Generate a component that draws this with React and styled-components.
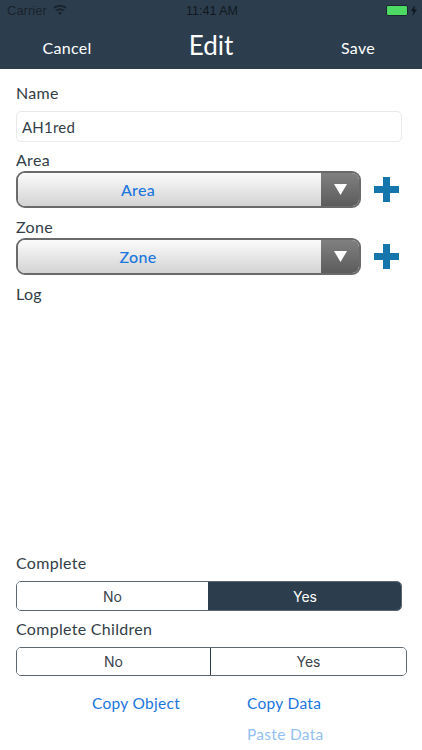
import React from 'react';
import styled, { createGlobalStyle } from 'styled-components';

const Global = createGlobalStyle`
  html, body { margin: 0; padding: 0; background: #fff; }
  body { font-family: "Lato", "Open Sans", sans-serif; }
`;

const Page = styled.div`
  width: 422px;
  height: 750px;
  overflow: hidden;
  display: flex;
  flex-direction: column;
  background: #fff;
`;

const Header = styled.header`
  height: 69px;
  background: #2c3e4e;
  flex: none;
`;

const StatusBar = styled.div`
  height: 21px;
  display: grid;
  grid-template-columns: 1fr auto 1fr;
  align-items: center;
  padding: 0 5px 0 7px;
  color: #11181f;
  font: 13px "Liberation Sans", sans-serif;
`;

const StatusLeft = styled.div`
  display: flex;
  align-items: center;
  gap: 6px;
  color: #1a232c;
`;

const StatusRight = styled.div`
  display: flex;
  align-items: center;
  justify-content: flex-end;
  gap: 3px;
`;

const Clock = styled.span`
  font-size: 12.5px;
  font-weight: 400;
`;

const Battery = styled.div`
  box-sizing: border-box;
  width: 22px;
  height: 11px;
  border-radius: 2px;
  background: #4cd964;
  border: 1px solid #1c2630;
`;

const NavBar = styled.div`
  height: 48px;
  display: grid;
  grid-template-columns: 134px 154px 134px;
  color: #fff;
`;

const NavButton = styled.span`
  align-self: end;
  padding-bottom: 12px;
  padding-left: ${p => p.$shift || 0}px;
  text-align: center;
  font-size: 16px;
  letter-spacing: 0.3px;
`;

const Title = styled.h1`
  margin: 0;
  padding-top: 6px;
  text-align: center;
  font-size: 26px;
  font-weight: 400;
  line-height: 36px;
`;

const Form = styled.main`
  flex: 1;
  display: flex;
  flex-direction: column;
  padding: 14px 16px 0;
`;

const Label = styled.label`
  display: block;
  height: 20px;
  line-height: 20px;
  font-size: 16px;
  letter-spacing: 0.3px;
  color: #333e48;
`;

const NameInput = styled.div`
  box-sizing: border-box;
  width: 386px;
  height: 31px;
  margin: 8px 0 8px;
  padding: 0 5px;
  display: flex;
  align-items: center;
  border: 1px solid #e9e9e9;
  border-radius: 5px;
  font-size: 15px;
  letter-spacing: 0.2px;
  color: #333e48;
`;

const PickerRow = styled.div`
  display: flex;
  align-items: center;
  gap: 12px;
  margin: 1px 0 9px;
`;

const Picker = styled.div`
  box-sizing: border-box;
  width: 345px;
  height: 37px;
  display: flex;
  border: 2px solid #6a6a6a;
  border-radius: 9px;
  overflow: hidden;
`;

const PickerValue = styled.div`
  flex: 1;
  display: flex;
  align-items: center;
  justify-content: center;
  padding-right: 63px;
  background: linear-gradient(#fbfbfb, #d3d3d3);
  color: #1b76dc;
  font-size: 16px;
  font-weight: 500;
  letter-spacing: 0.3px;
`;

const PickerArrow = styled.div`
  width: 38px;
  display: flex;
  align-items: center;
  justify-content: center;
  background: linear-gradient(#808080, #5c5c5c);
`;

const LogArea = styled.div`
  flex: 1;
`;

const Segments = styled.div`
  box-sizing: border-box;
  width: ${p => p.$width}px;
  height: ${p => p.$height}px;
  margin: 8px 0 8px;
  display: grid;
  grid-template-columns: ${p => p.$columns};
  border: 1px solid #5c6770;
  border-radius: 5px;
  overflow: hidden;
`;

const Segment = styled.div`
  display: flex;
  align-items: center;
  justify-content: center;
  font: 14px "Inter", sans-serif;
  background: ${p => (p.$on ? '#2c3e4e' : '#fff')};
  color: ${p => (p.$on ? '#fff' : '#3c444c')};
  & + & {
    border-left: 1px solid #2c3e4e;
  }
`;

const Actions = styled.div`
  display: grid;
  grid-template-columns: 155px auto;
  grid-auto-rows: 31px;
  padding: 3px 0 0 76px;
  height: 63px;
`;

const Action = styled.span`
  display: flex;
  align-items: center;
  font-size: 15.5px;
  letter-spacing: 0.3px;
  color: ${p => (p.$muted ? '#93c1f1' : '#1b76dc')};
  grid-column: ${p => p.$column};
`;

const Wifi = () => (
  <svg width="14" height="11" viewBox="0 0 16 12" fill="#1a232c">
    <path d="M8 11.5 5.600 8.600a3.800 3.800 0 0 1 4.800 0zM4.400 7.200 3 5.500a7.800 7.800 0 0 1 10 0l-1.400 1.700a5.600 5.600 0 0 0-7.200 0zM1.800 4.100.4 2.400a11.800 11.800 0 0 1 15.200 0l-1.400 1.700a9.600 9.600 0 0 0-12.400 0z" />
  </svg>
);

const Bolt = () => (
  <svg width="6" height="11" viewBox="0 0 6 11" fill="#11181f">
    <path d="M3.600 0 0 6.200h2.300L1.600 11 6 4.500H3.400z" />
  </svg>
);

const Triangle = () => (
  <svg width="13" height="11" viewBox="0 0 13 11">
    <path d="M0 0h13L6.500 11z" fill="#fff" />
  </svg>
);

const Plus = () => (
  <svg width="27" height="27" viewBox="0 0 27 27" fill="#1576ad">
    <path d="M10 1h7v9h9v7h-9v9h-7v-9H1v-7h9z" />
  </svg>
);

const AreaPicker = ({ value }) => (
  <PickerRow>
    <Picker>
      <PickerValue>{value}</PickerValue>
      <PickerArrow>
        <Triangle />
      </PickerArrow>
    </Picker>
    <Plus />
  </PickerRow>
);

export default function App() {
  return (
    <Page>
      <Global />
      <Header>
        <StatusBar>
          <StatusLeft>
            Carrier <Wifi />
          </StatusLeft>
          <Clock>11:41 AM</Clock>
          <StatusRight>
            <Battery />
            <Bolt />
          </StatusRight>
        </StatusBar>
        <NavBar>
          <NavButton>Cancel</NavButton>
          <Title>Edit</Title>
          <NavButton $shift={6}>Save</NavButton>
        </NavBar>
      </Header>
      <Form>
        <Label>Name</Label>
        <NameInput>AH1red</NameInput>
        <Label>Area</Label>
        <AreaPicker value="Area" />
        <Label>Zone</Label>
        <AreaPicker value="Zone" />
        <Label>Log</Label>
        <LogArea />
        <Label>Complete</Label>
        <Segments $width={386} $height={30} $columns="191px 1fr">
          <Segment>No</Segment>
          <Segment $on>Yes</Segment>
        </Segments>
        <Label>Complete Children</Label>
        <Segments $width={391} $height={29} $columns="193px 1fr">
          <Segment>No</Segment>
          <Segment>Yes</Segment>
        </Segments>
        <Actions>
          <Action>Copy Object</Action>
          <Action>Copy Data</Action>
          <Action $muted $column="2">Paste Data</Action>
        </Actions>
      </Form>
    </Page>
  );
}
